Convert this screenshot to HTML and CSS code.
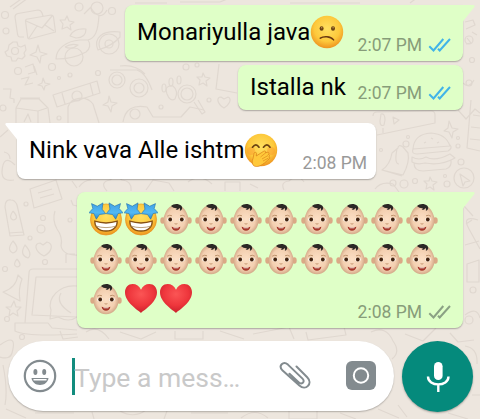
FILE: index.html
```html
<!DOCTYPE html>
<html lang="en">
<head>
<meta charset="utf-8">
<title>Chat</title>
<link rel="stylesheet" href="styles.css">
</head>
<body>
<svg class="defs" width="0" height="0" aria-hidden="true">
  <defs>
    <radialGradient id="yellow" cx=".5" cy=".4" r=".6">
      <stop offset="0" stop-color="#ffe060"/><stop offset=".65" stop-color="#fdc93c"/><stop offset="1" stop-color="#ee9420"/>
    </radialGradient>
    <radialGradient id="skin" cx=".5" cy=".5" r=".6">
      <stop offset="0" stop-color="#fce0c6"/><stop offset=".6" stop-color="#f3cfb0"/><stop offset="1" stop-color="#bd8e6c"/>
    </radialGradient>
    <linearGradient id="star" x1="0" y1="0" x2="0" y2="1">
      <stop offset="0" stop-color="#3fa0e4"/><stop offset=".6" stop-color="#52b9f4"/><stop offset="1" stop-color="#2a86cc"/>
    </linearGradient>
    <radialGradient id="red" cx=".5" cy=".35" r=".65">
      <stop offset="0" stop-color="#fb5555"/><stop offset=".6" stop-color="#ee363c"/><stop offset="1" stop-color="#c9202c"/>
    </radialGradient>
    <symbol id="confused" viewBox="0 0 34 34">
      <circle cx="17" cy="17" r="16.2" fill="url(#yellow)"/>
      <ellipse cx="11.6" cy="13.5" rx="2" ry="2.3" fill="#6b4212"/><ellipse cx="23" cy="13.5" rx="2" ry="2.3" fill="#6b4212"/>
      <circle cx="11.7" cy="12.8" r=".7" fill="#c79a5a"/><circle cx="23.1" cy="12.8" r=".7" fill="#c79a5a"/>
      <path d="M10.3 23.2c3-2.2 10-2.4 13.3 1.7" fill="none" stroke="#6b3a10" stroke-width="1.5" stroke-linecap="round"/>
    </symbol>
    <symbol id="giggle" viewBox="0 0 34 34">
      <circle cx="17" cy="17" r="16.2" fill="url(#yellow)"/>
      <circle cx="7" cy="18" r="4" fill="#f98a2c" opacity=".35"/><circle cx="27" cy="18" r="4" fill="#f98a2c" opacity=".35"/>
      <path d="M8.5 14.2q3.500-4.800 6.500 0M19.500 14.200q3.500-4.800 6.500 0" fill="none" stroke="#6b4212" stroke-width="1.7" stroke-linecap="round"/>
      <path d="M9.500 32.500c-1.800-2-1.500-5-.5-7l1-5c.4-1.800 2.600-1.500 2.500.2l-.3 2.300 7.600-4.800c1.500-.9 2.700.7 1.500 1.700l2-.6c1.600-.4 2.300 1.300 1 2.200 1.300 0 1.700 1.500.6 2.300 1 .2 1.200 1.600.2 2.200-2 1.400-3.600 3.500-6.600 5.400-3 2-6.700 3-9 1.100z" fill="#ffc83a" stroke="#d97e18" stroke-width=".7"/>
      <path d="M16.500 24l5-4M18 26l6-3.500M19 28l5.500-3" fill="none" stroke="#d97e18" stroke-width=".6"/>
    </symbol>
    <symbol id="starry" viewBox="0 0 34 34">
      <circle cx="17" cy="17.5" r="15.6" fill="url(#yellow)" stroke="#e5901d" stroke-width=".6"/>
      <path d="M5.800 19.200q11.200 3.600 22.400 0c.3 5-3.500 9.800-11.200 9.800S5.500 24.200 5.800 19.200z" fill="#fff" stroke="#875013" stroke-width="1.3"/>
      <path d="M6.600 24q10.400 3.200 20.800 0" fill="none" stroke="#a98a5c" stroke-width=".8"/>
      <g fill="url(#star)" stroke="#1e6eae" stroke-width=".6" stroke-linejoin="round">
        <path d="M2.500 1.600l5.800 2.600L14 .9l-.9 6.300 3.600 4.500-6.200.8-3.200 4.700-2.400-5.700-5-.7 3.900-4.200z"/>
        <path d="M31.500 1.600l-5.800 2.600L20 .9l.9 6.300-3.600 4.500 6.200.8 3.200 4.700 2.400-5.700 5-.7-3.900-4.200z"/>
      </g>
    </symbol>
    <symbol id="baby" viewBox="0 0 34 34">
      <ellipse cx="3.600" cy="18.500" rx="2.300" ry="3.200" fill="#dba986"/><ellipse cx="30.400" cy="18.500" rx="2.300" ry="3.200" fill="#dba986"/>
      <path d="M17 3c5 0 8.500 3 10.600 7.800 1.200 2.700 2 4.500 2 7.700C29.600 26 24 32.300 17 32.300S4.400 26 4.400 18.500c0-3.200.8-5 2-7.700C8.500 6 12 3 17 3z" fill="url(#skin)"/>
      <path d="M12 4C14.300 1.400 19.500 1.100 22.300 3.700c1.500 1.700 1.200 4.300-1.500 5 .6-1.400.3-2.300-.5-2.800-.5 1.400-1.800 2.100-3.700 1.900.8-.5 1.200-1 1.200-1.600-2 .2-3.800-.6-5.800-2.200z" fill="#2b2725"/>
      <path d="M8.200 14.200q2.600-1.700 4.800-.4M21 13.800q2.400-1.300 4.800.4" fill="none" stroke="#b58a62" stroke-width=".9"/>
      <ellipse cx="11" cy="17.600" rx="2.800" ry="1.900" fill="#fff"/><ellipse cx="23" cy="17.600" rx="2.800" ry="1.900" fill="#fff"/>
      <circle cx="11.200" cy="17.500" r="1.900" fill="#43230f"/><circle cx="22.800" cy="17.500" r="1.900" fill="#43230f"/>
      <path d="M15.600 21.600q1.400 1 2.800 0" fill="none" stroke="#c08d68" stroke-width=".9"/>
      <path d="M12.600 24.800q4.400 1.200 8.800 0-.8 4-4.400 4t-4.400-4z" fill="#a5372a"/>
      <path d="M14.300 25.300q2.700.5 5.400 0l-.5 1h-4.400z" fill="#fff"/>
    </symbol>
    <symbol id="heart" viewBox="0 0 34 34">
      <path d="M17 31C14 28 1 20.500 1 10.300 1 5.500 4.300 2 8.600 2c3.700 0 6.800 2 8.400 5.800C18.600 4 21.700 2 25.400 2 29.700 2 33 5.500 33 10.300 33 20.500 20 28 17 31z" fill="url(#red)"/>
    </symbol>
    <symbol id="ticks" viewBox="0 0 24 16">
      <path d="M1.300 9.300l4.200 4.200L15.300 2M10 11.800l1.700 1.700L22 2" fill="none" stroke="currentColor" stroke-width="2"/>
    </symbol>
    <symbol id="tail" viewBox="0 0 13 19">
      <path d="M0 0h11.300c1.500 0 1.700 1.200.9 2.200L2 15 0 18.500z" fill="currentColor"/>
    </symbol>
  </defs>
</svg>

<div class="screen">
  <svg class="wallpaper" viewBox="0 0 480 419" aria-hidden="true">
    <g class="doodle">
      <path d="M10 7L24-3M13 9L28-2"/>
      <path d="M24 37h-4q-2 0-2.500-3L15 17q0-3 3-3.500l20-3.500q3 0 4 3l1 3M28 19l23-4q2 0 2.500 2l2 15-26 7q-2 0-2-3l-2-15q0-2 2-2zM26 21l16 7 10-12M29 38l8-12M54 31l-9-6"/>
      <path d="M67 16l2 5 5 1-4 3 1 5-4-3-5 2 1-5-3-4h5z"/>
      <path d="M56 59c0-10 10-18 24-19h8c3 4 2 9-2 12-9 5-20 7-30 7zM70 36c2-5 8-8 16-7 0 6-4 9-10 9zM65 47q6-4 13-2-6 5-13 2M88 40c7-2 10-8 11-25M98 50c-5-12 4-20 22-18v5c-6 7-12 10-22 13zM84 14l7-7M91 8q9 14 16 2"/><circle cx="74" cy="57" r="9"/><circle cx="109" cy="44" r="10"/><circle cx="109" cy="44" r="4"/><circle cx="97" cy="8" r="6"/>
      <path d="M13 42l4 0 1 4 3 1 4-2 1 5-2 3 1 3-3 3-4-1-2 3h-4l-1-4-4-1-2-4 3-2 1-5z"/><circle cx="15" cy="51" r="3.500"/>
      <path d="M38 45l2 7 7 2-6 2-1 7-3-6-7-2 6-3zM43 78l2 5 5 1-5 2-1 4-2-4-4-1 4-2zM109 96l2 6 6 1-5 3-1 6-3-6-5-1 5-3zM25 67l8-3 2 8-7 2M34 66l3 9M21 79l8-2-4 8 8-2M3 89h8l-1 9 4 1v4"/>
      <path d="M16 123v-15l5-9h18l9 9 2 15M20 98h20M16 108l22 3 9-3M38 111v12M24 122l4-8 3 8"/>
      <path d="M53 95l44-14 3 12-43 14zM62 93l3 11M90 83l3 12M68 123v-16c3-10 18-12 25-3l6 19"/><circle cx="77" cy="96" r="5"/>
      <circle cx="117" cy="80" r="8"/><circle cx="117" cy="80" r="5"/><path d="M110 70h27q9 3 15 20M120 66q15-2 25 8"/><circle cx="139" cy="88" r="9"/><circle cx="139" cy="88" r="5"/>
      <circle cx="187" cy="94" r="9"/><circle cx="187" cy="94" r="6"/><path d="M194 102l8 12 3-2-7-12M203 73l2 4 5 1-4 3 1 5-4-3-4 2 1-5-3-3h5z"/><path d="M167 94q-3-9 6-8 6 5 2 13-5 3-8-5"/><ellipse cx="164" cy="88" rx="2" ry="4"/><ellipse cx="171" cy="82" rx="2" ry="4"/><ellipse cx="179" cy="80" rx="2" ry="4"/><circle cx="186" cy="67" r="3"/>
      <path d="M219 64l-3 25 21 4M224 108c-7-4-8-11-3-11l3 2 4-2c5 2 0 9-4 11zM123 122q3-19 24-15l6 10h28l9-10 14 3"/><circle cx="135" cy="114" r="5"/>
      <path d="M135 3h32M180 2h40l12-5M290 3h70M410 3l12-9"/>
      <path d="M465 22l8-2 2 5-9 4M472 32l5 3M467 38l4 5-5 1M474 80q-5 9-11 3"/><circle cx="469" cy="40" r="4"/><circle cx="472" cy="60" r="2.500"/><circle cx="469" cy="83" r="3"/>
      <path d="M373 116q0-4 4-4l54-1q4 0 4 4v8l-58 12M381 114q4-1 4 6l-1 5q-4 2-4-4zM383 128v5M393 117l6 3-5 4z"/>
      <path d="M449 121l3 7 6 1-5 3-1 6-3-6-5-1 4-3zM458 110l8 9 9-10 5 4M471 100l-4 48 13 3M473 115l7 1M471 127l9 1M470 139l10 1"/>
      <path d="M413 149q1-15 18-16 15 1 19 13zM413 149q-2 5 4 5l31-3q5-3 2-6M412 157q7 4 14 0 9 5 24-3l5 4q-14 8-30 5-8 2-13-1zM414 163q0 8 9 8l23-2q6-2 5-9M424 143l2-1M431 138l2 1M437 143l2-1"/>
      <path d="M382 170q8-5 10-17l6-5q0-4 5-1l5 6q2 9-5 22zM382 170l20 6M397 149q-3 15 2 15M375 189q6-8 18-5l6 8"/>
      <circle cx="464" cy="178" r="10"/><path d="M460 174l10 7-5 1-2 4zM430 177l2 4 5 1-4 3 1 5-4-3-4 2 1-5-3-3h5z"/>
      <circle cx="406" cy="144" r="3"/><circle cx="408" cy="137" r="1.500"/><circle cx="393" cy="183" r="3"/><circle cx="404" cy="184" r="4"/><circle cx="415" cy="181" r="2.500"/><circle cx="447" cy="184" r="3"/><circle cx="461" cy="162" r="3"/><circle cx="458" cy="146" r="2"/><circle cx="458" cy="138" r="1.500"/><circle cx="445" cy="176" r="1.500"/><circle cx="381" cy="150" r="1.500"/>
      <path d="M0 137l8-7M4 152q6 1 6 7M15 165q-12-12-13 7 0 10 12 8M30 189l26-9 6 19-28 9zM38 193l14-4M40 198l14-4M72 181l5 7M79 187q5-7 12-7M107 191q-8-9 3-11 6-6 12 0 10 1 9 11M146 190l7-10 16 3 5 8M188 182q12-9 24 2M225 191v-9h15v9M250 184l8 4M284 190q-4-8 5-9 9-8 15 1"/>
      <path d="M5 207q0-8 6-7 4 0 6 5l7 30-14 1zM9 233l14-1M13 211q7 8 0 9-5-2 0-9M13 241q8 9 0 12-7-3 0-12zM25 245q8 9 3 13-9-3-3-13zM17 259q6 7 0 8-5-2 0-8M44 256c-10-5-10-13-4-13l3 2 4-3c7 2 5 10-3 14z"/>
      <path d="M55 211q-3 9 2 18 6 8 4 17 2 10 19 9M66 263v-9h9M71 200l2 5 4 1M77 269H33q-4 0-4 4l-4 50M77 277H36l-4 38 45 2M77 330l-25-2-4-5H15v8q12 6 62 3"/><path d="M77 286c-18-2-30 13-26 24l-1 9 8-2q11 6 19 0M61 293q-6 10 10 20"/>
      <path d="M18 275q-2 13-15 17l17 9q-2-12 2-22zM14 301l2 6 5 0-4 4 1 5-5-3-4 3 1-6-4-3h5z"/>
      <path d="M478 220q-17-5-9 9l11 20M465 245l14-4M467 264l12-4v22h-12zM465 315q12-9 15 3M466 224l6-4M464 206l9 10"/><circle cx="473" cy="290" r="3"/><circle cx="469" cy="320" r="4"/>
      <path d="M0 345q18-13 12 8-2 7-12 4M60 331l3 8 15-2M86 332q12-8 23 7M120 332l21 7 15-7M175 331v8h28v-8M220 331l24 8M253 334l36-7 5 12M306 332l2 8 38-5-2-8M371 332q15-7 22 9 8 11-1 18M405 334l18 7 13-13M450 333l8 9 16-2M465 346q13 2 12 18M470 363v22M472 395h8M3 365q5 25 2 40M6 409l20 9M35 413h39M92 412l2 7M120 411q14 8 26-1M167 411l-3 8M191 413h37M241 418q14-11 27 0M289 411v8h28v-8M340 413l16 6M378 409l21 9M398 405l9 12M448 413l20 6"/>
      <circle cx="6" cy="31" r="3"/><circle cx="5" cy="15" r="3.500"/><circle cx="79" cy="7" r="4"/><circle cx="112" cy="11" r="3.500"/><circle cx="52" cy="67" r="3.500"/><circle cx="18" cy="71" r="3.500"/><circle cx="98" cy="73" r="2.500"/><circle cx="70" cy="75" r="2"/><circle cx="59" cy="78" r="1.500"/><circle cx="3" cy="108" r="3"/><circle cx="59" cy="118" r="2"/><circle cx="41" cy="229" r="4"/><circle cx="43" cy="218" r="2.500"/><circle cx="30" cy="238" r="2"/><circle cx="45" cy="262" r="2.500"/><circle cx="5" cy="269" r="2.500"/><circle cx="26" cy="204" r="2"/><circle cx="7" cy="319" r="2.500"/><circle cx="22" cy="337" r="2.500"/><circle cx="70" cy="220" r="2"/><circle cx="197" cy="65" r="2"/><circle cx="209" cy="100" r="2"/><circle cx="161" cy="107" r="2"/>
    </g>
  </svg>

  <main class="thread">
    <div class="bubble out lead">
      <svg class="tail"><use href="#tail"/></svg>
      <p class="text">Monariyulla java<svg class="emoji"><use href="#confused"/></svg></p>
      <span class="meta">2:07 PM<svg class="ticks read"><use href="#ticks"/></svg></span>
    </div>
    <div class="bubble out follow">
      <p class="text">Istalla nk</p>
      <span class="meta">2:07 PM<svg class="ticks read"><use href="#ticks"/></svg></span>
    </div>
    <div class="bubble in">
      <svg class="tail"><use href="#tail"/></svg>
      <p class="text">Nink vava Alle ishtm<svg class="emoji"><use href="#giggle"/></svg></p>
      <span class="meta">2:08 PM</span>
    </div>
    <div class="bubble out burst">
      <svg class="tail"><use href="#tail"/></svg>
      <div class="emoji-grid">
        <svg><use href="#starry"/></svg><svg><use href="#starry"/></svg><svg><use href="#baby"/></svg><svg><use href="#baby"/></svg><svg><use href="#baby"/></svg><svg><use href="#baby"/></svg><svg><use href="#baby"/></svg><svg><use href="#baby"/></svg><svg><use href="#baby"/></svg><svg><use href="#baby"/></svg>
        <svg><use href="#baby"/></svg><svg><use href="#baby"/></svg><svg><use href="#baby"/></svg><svg><use href="#baby"/></svg><svg><use href="#baby"/></svg><svg><use href="#baby"/></svg><svg><use href="#baby"/></svg><svg><use href="#baby"/></svg><svg><use href="#baby"/></svg><svg><use href="#baby"/></svg>
        <svg><use href="#baby"/></svg><svg><use href="#heart"/></svg><svg><use href="#heart"/></svg>
      </div>
      <span class="meta">2:08 PM<svg class="ticks"><use href="#ticks"/></svg></span>
    </div>
  </main>

  <footer class="composer">
    <div class="field">
      <svg class="smile" viewBox="0 0 34 34">
        <circle cx="17" cy="17" r="15.200" fill="none" stroke="currentColor" stroke-width="2.200"/>
        <ellipse cx="12.400" cy="13" rx="2" ry="2.900" fill="currentColor"/><ellipse cx="21.200" cy="13" rx="2" ry="2.900" fill="currentColor"/>
        <path d="M8.500 19h17c-.5 4.200-4 7-8.500 7s-8-2.800-8.500-7z" fill="currentColor"/><path d="M11 20.700h12" stroke="#fff" stroke-width="1.500" stroke-linecap="round"/>
      </svg>
      <span class="placeholder">Type a mess…</span>
      <svg class="clip" viewBox="0 0 34 32">
        <path d="M18.500 4.500L29.200 15.200c6.200 6.300-1.500 14-7.800 8.200L4.600 8.600C-.2 3.900 5.300-1.500 9.900 2.600l14.600 14c3.200 3.200-.9 6.500-3.900 3.700L11.500 11.800" transform="translate(0 2)" fill="none" stroke="currentColor" stroke-width="2" stroke-linecap="round" stroke-linejoin="round"/>
      </svg>
      <svg class="camera" viewBox="0 0 30 30">
        <rect width="30" height="29" rx="6" fill="currentColor"/><circle cx="15" cy="14.500" r="7.200" fill="none" stroke="#fff" stroke-width="2"/>
      </svg>
    </div>
    <div class="mic">
      <svg viewBox="0 0 24 32">
        <rect x="8" y="1" width="8.600" height="18" rx="4.300" fill="#fff"/><path d="M2 15.500c0 10.500 20.500 10.500 20.500 0M12.300 23v8" fill="none" stroke="#fff" stroke-width="2.400"/>
      </svg>
    </div>
  </footer>
</div>
</body>
</html>
```
FILE: styles.css
```css
* { box-sizing: border-box; }

body {
  margin: 0;
  font-family: Roboto, "Liberation Sans", sans-serif;
  color: #000;
}

.defs { position: absolute; }

.screen {
  position: relative;
  width: 480px;
  height: 419px;
  overflow: hidden;
  display: flex;
  flex-direction: column;
  background: #ede6de;
}

.wallpaper {
  position: absolute;
  inset: 0;
  width: 480px;
  height: 419px;
}

.doodle {
  fill: none;
  stroke: #e0d8d0;
  stroke-width: 1.2;
  stroke-linejoin: round;
}

.thread {
  position: relative;
  display: flex;
  flex-direction: column;
  padding: 5px 17px 0;
}

.bubble {
  position: relative;
  display: flex;
  justify-content: space-between;
  align-items: flex-end;
  border-radius: 8px;
  box-shadow: 0 1px 1.5px rgba(0, 0, 0, .28);
}

.out {
  align-self: flex-end;
  background: #dfffc7;
  color: #000;
  padding: 0 11px 0 12px;
}

.in {
  align-self: flex-start;
  background: #fff;
  width: 359px;
  height: 56px;
  margin-top: 13px;
  padding: 0 9px 0 12px;
  border-top-left-radius: 0;
}

.lead { width: 338px; height: 56px; border-top-right-radius: 0; }
.follow { width: 225px; height: 45px; margin-top: 4px; }
.burst { width: 386px; height: 136px; margin-top: 13px; border-top-right-radius: 0; }

.tail {
  position: absolute;
  top: 0;
  width: 13px;
  height: 19px;
}

.out .tail { left: 100%; margin-left: -1px; color: #dfffc7; }
.in .tail { right: 100%; margin-right: -1px; color: #fff; transform: scaleX(-1); }

.text {
  display: flex;
  align-items: center;
  align-self: center;
  margin: 0;
  padding-bottom: 2px;
  font-size: 24px;
  line-height: 34px;
  white-space: nowrap;
}

.emoji { width: 34px; height: 34px; }

.meta {
  display: flex;
  align-items: center;
  gap: 6px;
  padding-bottom: 6px;
  font-size: 17.5px;
  line-height: 20px;
  color: #879c79;
  white-space: nowrap;
}

.follow .meta { padding-bottom: 7px; }
.in .meta { color: #999; }

.ticks { width: 24px; height: 16px; color: #8ba184; }
.read { color: #41b4e8; }

.emoji-grid {
  display: grid;
  grid-template-columns: repeat(10, 35.1px);
  grid-auto-rows: 40px;
  align-self: flex-start;
  padding-top: 10px;
}

.emoji-grid svg { width: 34px; height: 34px; }
.burst .meta { margin-left: -105px; }

.composer {
  position: relative;
  display: flex;
  gap: 8px;
  padding: 13px 7px 0 8px;
}

.field {
  display: flex;
  align-items: center;
  width: 386px;
  height: 70px;
  padding: 0 18px 0 15px;
  border-radius: 35px;
  background: #fff;
  box-shadow: 0 1px 1.5px rgba(0, 0, 0, .25);
  color: #838b8f;
}

.smile { width: 34px; height: 34px; }

.placeholder {
  width: 206px;
  height: 37px;
  margin-left: 15px;
  border-left: 3px solid #128c7e;
  font-size: 26.5px;
  line-height: 39px;
  text-indent: -1px;
  color: #c9c9c9;
  white-space: nowrap;
}

.clip { width: 34px; height: 32px; }
.camera { width: 30px; height: 30px; margin-left: auto; }

.mic {
  display: flex;
  align-items: center;
  justify-content: center;
  width: 71px;
  height: 71px;
  border-radius: 50%;
  background: #058a7c;
  box-shadow: 0 1px 2px rgba(0, 0, 0, .3);
}

.mic svg { width: 24px; height: 32px; }
```
